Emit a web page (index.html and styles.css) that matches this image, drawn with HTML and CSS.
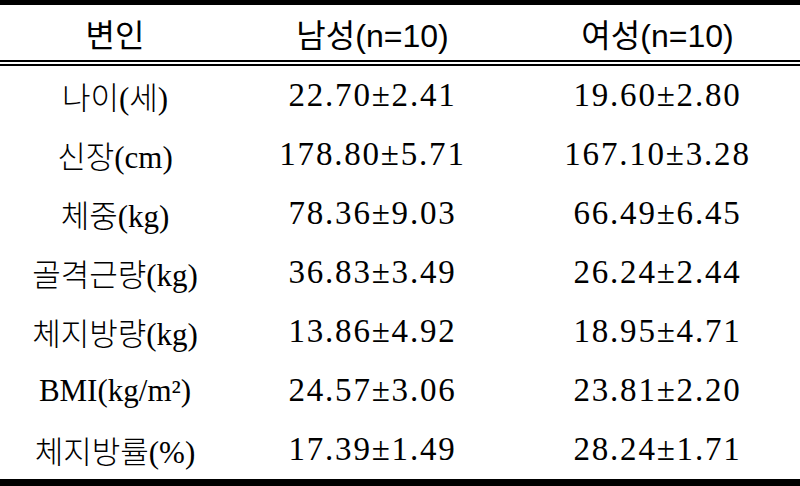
FILE: index.html
```html
<!DOCTYPE html>
<html lang="ko">
<head>
<meta charset="utf-8">
<link rel="stylesheet" href="styles.css">
</head>
<body>
<table class="stats">
  <colgroup>
    <col class="c1"><col class="c2"><col class="c3">
  </colgroup>
  <thead>
    <tr><th>변인</th><th>남성(n=10)</th><th>여성(n=10)</th></tr>
  </thead>
  <tbody>
    <tr><td class="lbl">나이(세)</td><td>22.70±2.41</td><td>19.60±2.80</td></tr>
    <tr><td class="lbl">신장(cm)</td><td>178.80±5.71</td><td>167.10±3.28</td></tr>
    <tr><td class="lbl">체중(kg)</td><td>78.36±9.03</td><td>66.49±6.45</td></tr>
    <tr><td class="lbl">골격근량(kg)</td><td>36.83±3.49</td><td>26.24±2.44</td></tr>
    <tr><td class="lbl">체지방량(kg)</td><td>13.86±4.92</td><td>18.95±4.71</td></tr>
    <tr><td class="lbl">BMI(kg/m²)</td><td>24.57±3.06</td><td>23.81±2.20</td></tr>
    <tr><td class="lbl">체지방률(%)</td><td>17.39±1.49</td><td>28.24±1.71</td></tr>
  </tbody>
</table>
</body>
</html>
```
FILE: styles.css
```css
html, body {
  margin: 0;
  padding: 0;
  background: #fff;
  color: #000;
}
.stats {
  width: 800px;
  border-collapse: collapse;
  table-layout: fixed;
  border-top: 5px solid #000;
  border-bottom: 7px solid #000;
}
.c1 { width: 230px; }
.c2 { width: 285px; }
.c3 { width: 285px; }
.stats th {
  height: 55px;
  padding: 0;
  font-family: "Liberation Sans", "Noto Sans CJK KR", sans-serif;
  font-weight: normal;
  font-size: 32px;
  text-align: center;
  vertical-align: middle;
  border-bottom: 6px double #000;
}
.stats td {
  height: 59px;
  padding: 0;
  font-family: "Liberation Serif", "Noto Sans CJK KR", serif;
  font-weight: 300;
  font-size: 33px;
  letter-spacing: 1.8px;
  text-align: center;
  vertical-align: middle;
}
.stats td.lbl {
  font-size: 31px;
  letter-spacing: 0;
}
```
